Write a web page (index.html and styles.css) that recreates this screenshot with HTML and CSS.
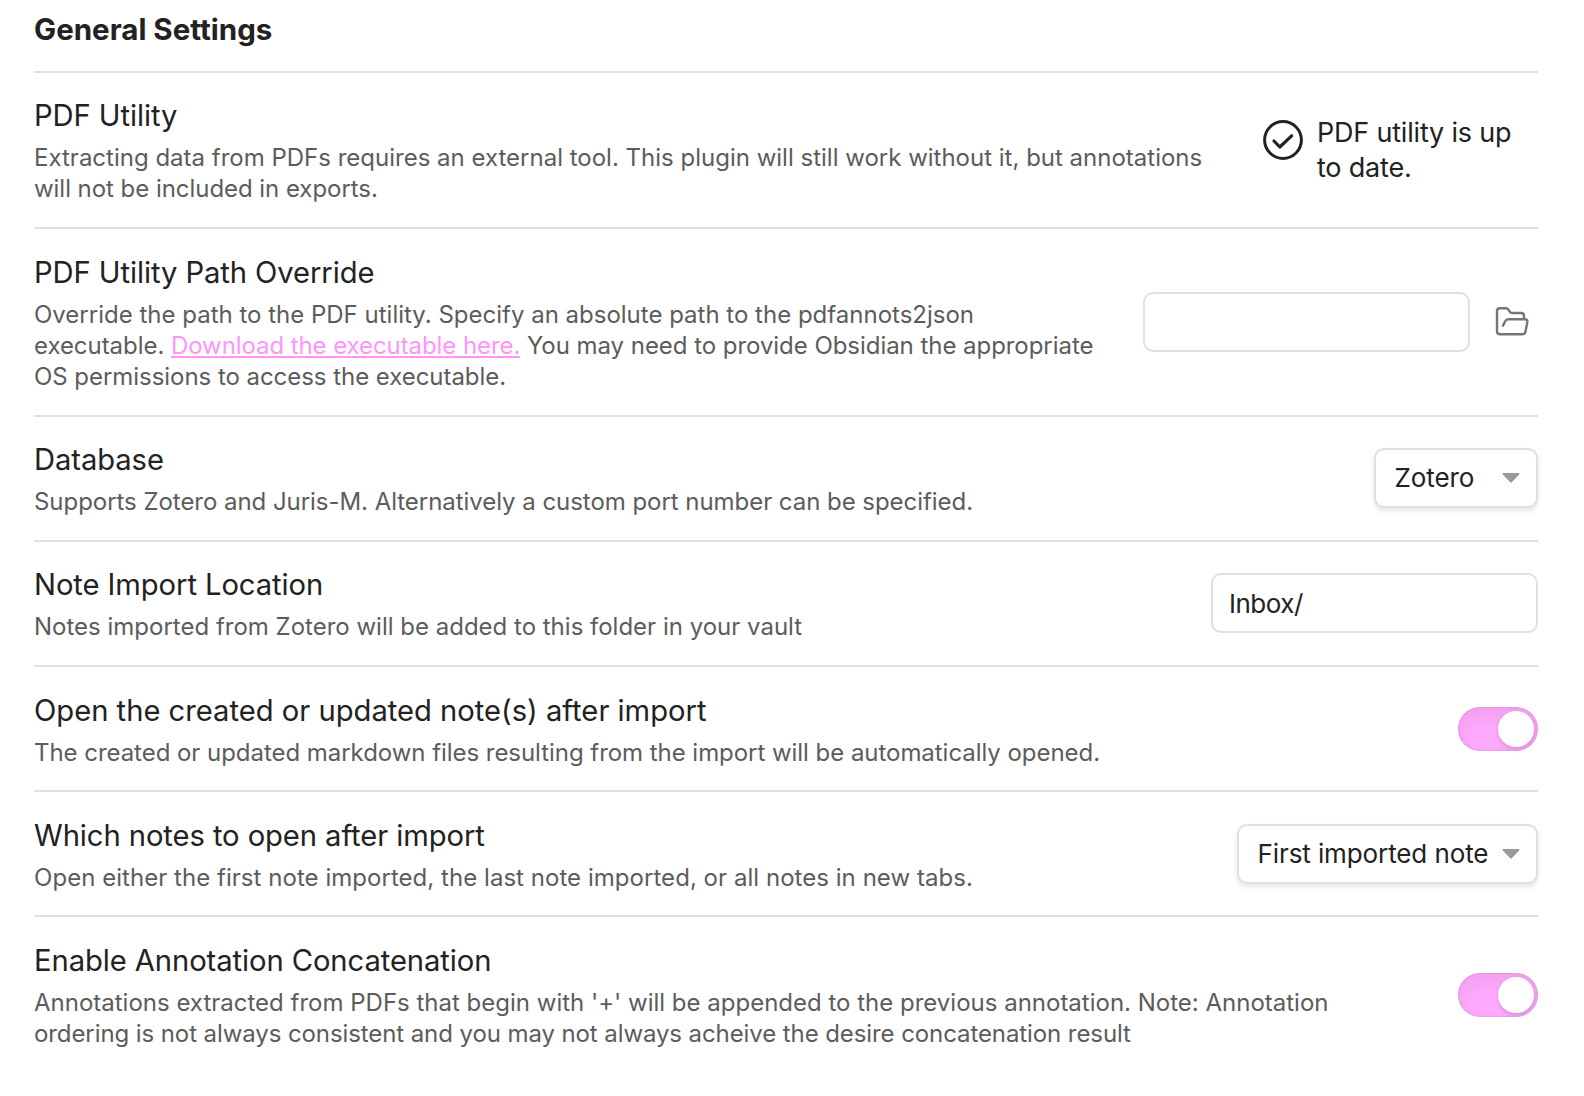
FILE: index.html
```html
<!DOCTYPE html>
<html lang="en">
<head>
<meta charset="utf-8">
<title>General Settings</title>
<link rel="stylesheet" href="styles.css">
</head>
<body>
<main class="settings">
  <h2 class="heading">General Settings</h2>

  <section class="item">
    <div class="info info-raised">
      <div class="name">PDF Utility</div>
      <p class="desc">Extracting data from PDFs requires an external tool. This plugin will still work without it, but annotations<br><span class="snug">will not be included in exports.</span></p>
    </div>
    <div class="status">
      <svg class="check" viewBox="0 0 40 40" fill="none" stroke="currentColor" stroke-linecap="round" stroke-linejoin="round">
        <circle cx="20" cy="20" r="18.4" stroke-width="3"/>
        <path d="M11 21l5.8 6L28.6 15.8" stroke-width="3.2"/>
      </svg>
      <div class="status-text">PDF utility is up<br>to date.</div>
    </div>
  </section>

  <section class="item">
    <div class="info">
      <div class="name">PDF Utility Path Override</div>
      <p class="desc">Override the path to the PDF utility. Specify an absolute path to the pdfannots2json<br><span class="snug">executable. </span><a class="link" href="#">Download the executable here.</a><span class="snug"> You may need to provide Obsidian the appropriate</span><br><span class="snug">OS permissions to access the executable.</span></p>
    </div>
    <div class="path-control">
      <input class="field" type="text" aria-label="PDF Utility Path Override">
      <svg class="folder" viewBox="0 0 34 30" fill="none" stroke="currentColor" stroke-width="2.4" stroke-linecap="round" stroke-linejoin="round">
        <path d="M29 13V10Q29 7 26 7H17.2Q15.6 7 14.7 5.6L13.4 3.6Q12.5 2.3 11 2.3H5Q2 2.3 2 5.3V25.3Q2 28.3 5 28.3H27.6Q29.9 28.3 30.4 26L32.3 16.3Q32.9 13.3 30 13.3H13.4Q11.2 13.3 10.2 15.2L8 19.7"/>
      </svg>
    </div>
  </section>

  <section class="item">
    <div class="info">
      <div class="name">Database</div>
      <p class="desc snug">Supports Zotero and Juris-M. Alternatively a custom port number can be specified.</p>
    </div>
    <button class="dropdown dropdown-short" type="button">Zotero<svg class="arrow" viewBox="0 0 18 10"><path d="M1.2 0H16.8Q18 .3 17.2 1.4L9.8 9.3Q9 10 8.2 9.3L.8 1.4Q0 .3 1.2 0Z"/></svg></button>
  </section>

  <section class="item">
    <div class="info">
      <div class="name">Note Import Location</div>
      <p class="desc">Notes imported from Zotero will be added to this folder in your vault</p>
    </div>
    <input class="field" type="text" value="Inbox/" aria-label="Note Import Location">
  </section>

  <section class="item">
    <div class="info info-lowered">
      <div class="name name-wide">Open the created or updated note(s) after import</div>
      <p class="desc snug">The created or updated markdown files resulting from the import will be automatically opened.</p>
    </div>
    <div class="toggle" role="switch" aria-checked="true"><span class="thumb"></span></div>
  </section>

  <section class="item">
    <div class="info info-lowered">
      <div class="name">Which notes to open after import</div>
      <p class="desc loose">Open either the first note imported, the last note imported, or all notes in new tabs.</p>
    </div>
    <button class="dropdown dropdown-long" type="button">First imported note<svg class="arrow" viewBox="0 0 18 10"><path d="M1.2 0H16.8Q18 .3 17.2 1.4L9.8 9.3Q9 10 8.2 9.3L.8 1.4Q0 .3 1.2 0Z"/></svg></button>
  </section>

  <section class="item">
    <div class="info info-lowered">
      <div class="name">Enable Annotation Concatenation</div>
      <p class="desc">Annotations extracted from PDFs that begin with '+' will be appended to the previous annotation. Note: Annotation<br><span class="tight">ordering is not always consistent and you may not always acheive the desire concatenation result</span></p>
    </div>
    <div class="toggle" role="switch" aria-checked="true"><span class="thumb"></span></div>
  </section>
</main>
</body>
</html>
```
FILE: styles.css
```css
* {
  box-sizing: border-box;
}

body {
  margin: 0;
  background: #fff;
  color: #222;
  font-family: Inter, "Liberation Sans", sans-serif;
}

.settings {
  padding: 11px 46px 0 34px;
}

.heading {
  margin: 0;
  height: 60px;
  font-size: 29.5px;
  font-weight: 700;
  line-height: 37px;
}

.item {
  display: flex;
  align-items: center;
  justify-content: space-between;
  padding: 24.42px 0 22.31px;
  border-top: 2px solid #e0e0e0;
}

.info {
  white-space: nowrap;
}

.info-raised {
  margin: -0.35px 0 0.35px;
}

.info-lowered {
  margin: 0.3px 0 -0.3px;
}

.name {
  margin-bottom: 8.02px;
  font-size: 29.2px;
  line-height: 37px;
  letter-spacing: -0.08px;
}

.name-wide {
  letter-spacing: -0.01px;
}

.desc {
  margin: 0;
  color: #5c5c5c;
  font-size: 24px;
  line-height: 31.3px;
}

.snug {
  letter-spacing: -0.045px;
}

.tight {
  letter-spacing: -0.09px;
}

.loose {
  letter-spacing: 0.04px;
}

.link {
  color: #ff94fd;
  letter-spacing: -0.08px;
  text-decoration: underline 2px;
  text-underline-offset: 2px;
}

.status {
  display: flex;
  gap: 14px;
  width: 275px;
  padding-bottom: 3px;
  white-space: nowrap;
}

.check {
  width: 40px;
  height: 40px;
  margin-top: 5px;
}

.status-text {
  font-size: 27px;
  line-height: 35.1px;
  letter-spacing: -0.2px;
}

.path-control {
  display: flex;
  align-items: center;
  gap: 25px;
  padding-right: 9px;
}

.folder {
  width: 34px;
  height: 30px;
  margin-bottom: 4px;
  color: #757575;
}

.field {
  width: 327px;
  height: 60px;
  margin: 0 0 2.6px;
  padding: 0 16px;
  border: 2px solid #e0e0e0;
  border-radius: 10px;
  background: #fff;
  color: #222;
  font: 26px Inter, sans-serif;
  letter-spacing: -0.5px;
}

.dropdown {
  display: flex;
  align-items: center;
  justify-content: space-between;
  height: 60px;
  padding: 0 16px 1.4px 18.5px;
  border: 2px solid #e0e0e0;
  border-radius: 10px;
  background: #fff;
  box-shadow: 0 3px 5px rgba(0, 0, 0, 0.1);
  color: #222;
  font: 26px Inter, sans-serif;
  letter-spacing: -0.1px;
}

.dropdown-short {
  width: 164px;
  margin: 0 0 2.6px;
}

.dropdown-long {
  width: 301px;
  margin: 0 0 1px;
}

.arrow {
  width: 18px;
  height: 10px;
  margin-top: 2px;
  fill: #999;
}

.toggle {
  display: flex;
  justify-content: flex-end;
  width: 80px;
  height: 44px;
  margin-bottom: 1px;
  padding: 4px;
  border-radius: 22px;
  background: #ffaafd;
  box-shadow: inset 0 8px 20px rgba(0, 0, 0, 0.07), inset 0 0 2px rgba(0, 0, 0, 0.21);
}

.thumb {
  width: 36px;
  height: 36px;
  border-radius: 50%;
  background: #fff;
  box-shadow: 0 2px 4px rgba(0, 0, 0, 0.15);
}
```
